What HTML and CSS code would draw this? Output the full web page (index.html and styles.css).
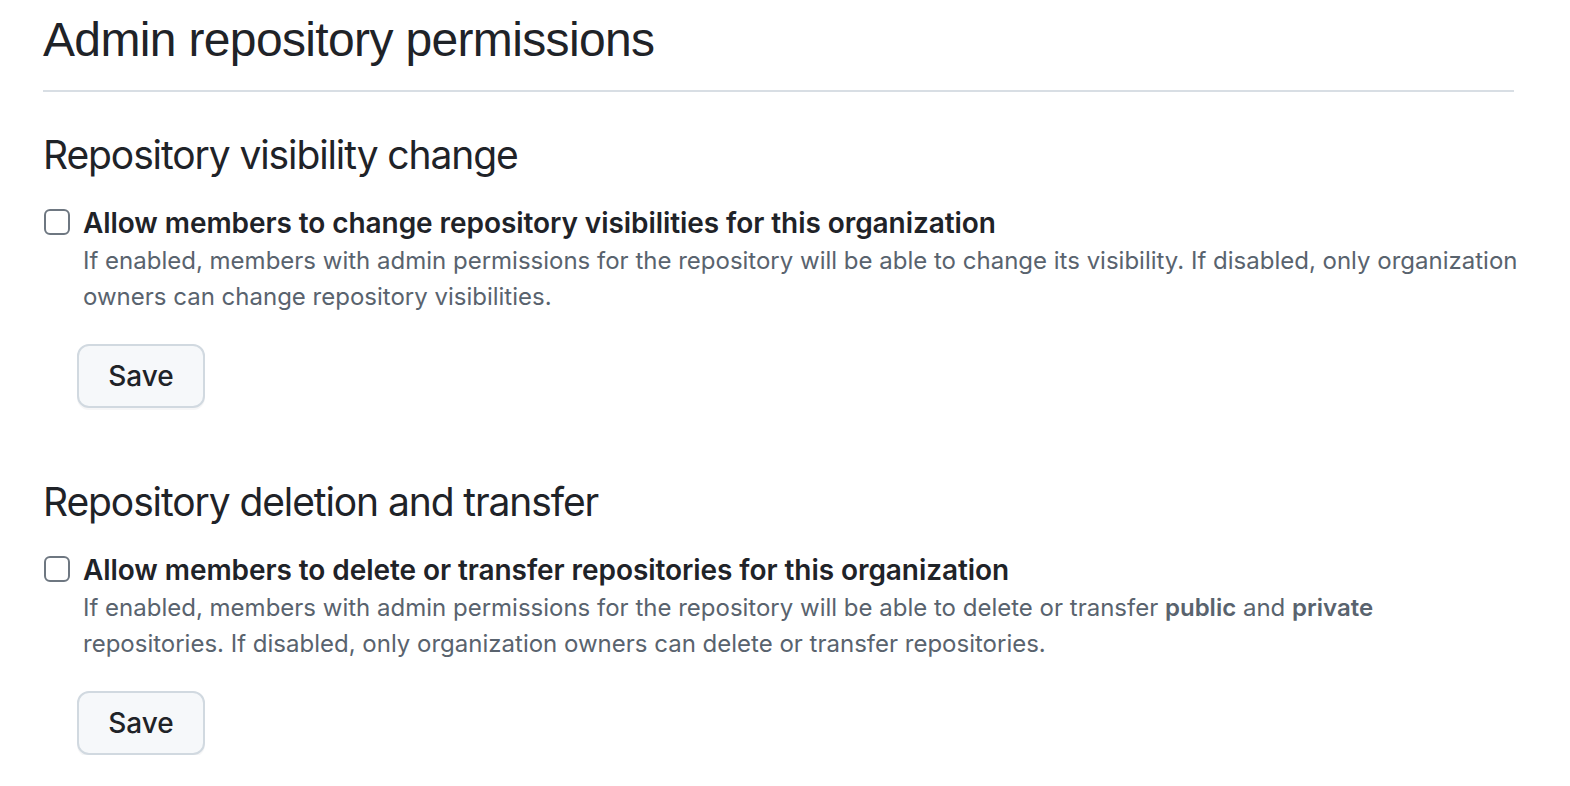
FILE: index.html
```html
<!DOCTYPE html>
<html lang="en">
<head>
<meta charset="utf-8">
<title>Admin repository permissions</title>
<link rel="stylesheet" href="styles.css">
</head>
<body>
<main class="page">
  <div class="subhead">
    <h2 class="subhead-title">Admin repository permissions</h2>
  </div>

  <section class="setting">
    <h3 class="setting-title">Repository visibility change</h3>
    <form class="setting-form">
      <div class="check-row">
        <span class="checkbox"></span>
        <div class="check-body">
          <label class="check-label">Allow members to change repository visibilities for this organization</label>
          <p class="note">If enabled, members with admin permissions for the repository will be able to change its visibility. If disabled, only organization owners can change repository visibilities.</p>
        </div>
      </div>
      <button type="button" class="btn">Save</button>
    </form>
  </section>

  <section class="setting">
    <h3 class="setting-title">Repository deletion and transfer</h3>
    <form class="setting-form">
      <div class="check-row">
        <span class="checkbox"></span>
        <div class="check-body">
          <label class="check-label">Allow members to delete or transfer repositories for this organization</label>
          <p class="note">If enabled, members with admin permissions for the repository will be able to delete or transfer <strong>public</strong> and <strong>private</strong> repositories. If disabled, only organization owners can delete or transfer repositories.</p>
        </div>
      </div>
      <button type="button" class="btn">Save</button>
    </form>
  </section>
</main>
</body>
</html>
```

FILE: styles.css
```css
* { box-sizing: border-box; }
html, body { margin: 0; padding: 0; background: #ffffff; }
body {
  font-family: Inter, "Noto Sans", sans-serif;
  color: #1f2328;
}
.page {
  padding: 8px 56px 0 43px;
}
.subhead {
  border-bottom: 2px solid #d8dee4;
  padding-bottom: 18px;
}
.subhead-title {
  margin: 0;
  font-family: "Liberation Sans", Arial, sans-serif;
  font-weight: 400;
  font-size: 48px;
  letter-spacing: -0.65px;
  line-height: 64px;
  color: #1f2328;
}
.setting {
  padding-top: 35px;
}
.setting + .setting {
  padding-top: 66px;
}
.setting-title {
  margin: 0;
  font-weight: 400;
  font-size: 39px;
  letter-spacing: -1.1px;
  line-height: 56px;
  color: #1f2328;
}
.setting-form {
  margin-top: 20px;
}
.check-row {
  display: flex;
  align-items: flex-start;
  gap: 13px;
}
.checkbox {
  flex: none;
  width: 26px;
  height: 26px;
  margin-top: 6px;
  margin-left: 1px;
  border: 2px solid #6e7781;
  border-radius: 6px;
  background: #ffffff;
}
.check-body {
  flex: 1;
  margin-right: -6px;
}
.check-label {
  display: block;
  font-weight: 600;
  font-size: 28px;
  letter-spacing: -0.07px;
  line-height: 40px;
  color: #1f2328;
}
.note {
  margin: 0;
  font-size: 24px;
  line-height: 36px;
  color: #59636e;
}
.note strong { font-weight: 600; }
.btn {
  display: block;
  margin: 29px 0 0 34px;
  width: 128px;
  height: 64px;
  border: 2px solid #d1d9e0;
  border-radius: 12px;
  background: #f6f8fa;
  box-shadow: 0 2px 0 rgba(31, 35, 40, 0.04);
  font-family: Inter, "Noto Sans", sans-serif;
  font-weight: 500;
  font-size: 28px;
  color: #1f2328;
  padding: 0;
}
```
